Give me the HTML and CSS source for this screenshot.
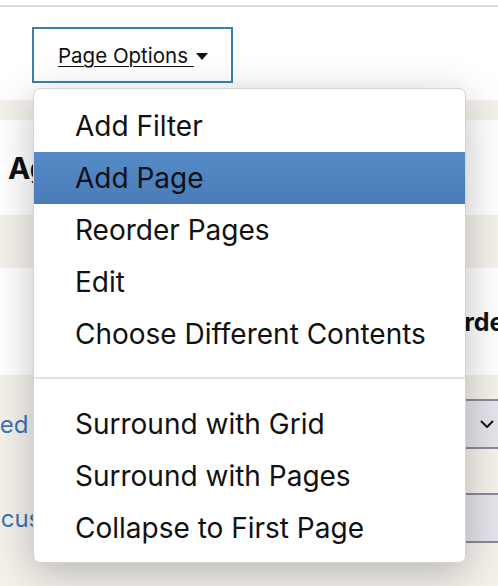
FILE: index.html
```html
<!DOCTYPE html>
<html lang="en">
<head>
<meta charset="utf-8">
<title>Page Options</title>
<link rel="stylesheet" href="styles.css">
</head>
<body>
  <div class="topbar"></div>

  <div class="toolbar">
    <button class="options-btn" type="button">
      <span class="options-label">Page Options </span><span class="caret"></span>
    </button>
  </div>

  <div class="band band-thin"></div>

  <section class="panel panel-title">
    <h1 class="title">Agenda</h1>
  </section>

  <div class="band band-mid"></div>

  <section class="panel panel-head">
    <h2 class="col-head">Orders</h2>
  </section>

  <section class="form">
    <div class="form-row">
      <span class="form-label">Shared</span>
      <div class="select-box">
        <svg class="chev" viewBox="0 0 14 9" width="14" height="9" aria-hidden="true">
          <path d="M1.5 1.5 L7 7 L12.5 1.5" fill="none" stroke="#111" stroke-width="2" stroke-linecap="round" stroke-linejoin="round"/>
        </svg>
      </div>
    </div>
    <div class="form-row">
      <span class="form-label">Add custom fields</span>
      <div class="select-box"></div>
    </div>
  </section>

  <div class="menu" role="menu">
    <ul class="menu-group">
      <li class="menu-item">Add Filter</li>
      <li class="menu-item is-active">Add Page</li>
      <li class="menu-item">Reorder Pages</li>
      <li class="menu-item">Edit</li>
      <li class="menu-item">Choose Different Contents</li>
    </ul>
    <hr class="menu-sep">
    <ul class="menu-group">
      <li class="menu-item">Surround with Grid</li>
      <li class="menu-item">Surround with Pages</li>
      <li class="menu-item">Collapse to First Page</li>
    </ul>
  </div>
</body>
</html>
```

FILE: styles.css
```css
* {
  box-sizing: border-box;
}

html, body {
  margin: 0;
  padding: 0;
}

body {
  position: relative;
  width: 498px;
  height: 586px;
  overflow: hidden;
  background: #f4f1eb;
  font-family: Inter, "Noto Sans", sans-serif;
  color: #111;
}

.topbar {
  height: 7px;
  background: #fff;
  border-bottom: 2px solid #dcdcdc;
}

.toolbar {
  background: #fff;
  padding: 20px 0 17px 32px;
}

.options-btn {
  display: flex;
  align-items: center;
  width: 201px;
  height: 56px;
  padding: 0 0 0 24px;
  background: #fff;
  border: 2px solid #3a80b2;
  font: inherit;
  font-size: 20.5px;
  color: #111;
  cursor: pointer;
}

.options-label {
  text-decoration: underline;
  text-underline-offset: 3px;
  text-decoration-thickness: 1px;
  white-space: pre;
}

.caret {
  width: 0;
  height: 0;
  margin-left: 2px;
  margin-top: 3px;
  border-left: 6.5px solid transparent;
  border-right: 6.5px solid transparent;
  border-top: 7px solid #111;
}

.band {
  background: #f4f1eb;
}

.band-thin {
  height: 20px;
}

.band-mid {
  height: 53px;
}

.panel {
  background: #fff;
}

.panel-title {
  height: 95px;
  display: flex;
  align-items: center;
  padding-left: 8px;
}

.title {
  margin: 0;
  font-size: 30px;
  font-weight: 700;
}

.panel-head {
  height: 107px;
  display: flex;
  align-items: center;
  padding-left: 445px;
}

.col-head {
  margin: 0;
  font-size: 25px;
  font-weight: 700;
  white-space: nowrap;
}

.form {
  display: flex;
  flex-direction: column;
  gap: 44px;
  padding-top: 24px;
  margin-left: -52px;
}

.form-row {
  display: flex;
  align-items: center;
  height: 50px;
}

.form-label {
  width: 517px;
  flex: none;
  font-size: 24px;
  color: #3b76b5;
  white-space: nowrap;
}

.select-box {
  flex: none;
  width: 120px;
  height: 50px;
  display: flex;
  align-items: center;
  padding-left: 15px;
  background: #e5e4eb;
  border-top: 2px solid #8b8b98;
  border-bottom: 2px solid #8b8b98;
}

/* dropdown menu floating above the page */
.menu {
  position: absolute;
  left: 33px;
  top: 88px;
  width: 433px;
  padding: 11px 0 8px;
  background: #fff;
  border: 1px solid #d4d4d4;
  border-radius: 7px;
  box-shadow: 0 10px 40px rgba(0, 0, 0, 0.25);
}

.menu-group {
  list-style: none;
  margin: 0;
  padding: 0;
}

.menu-item {
  height: 52px;
  display: flex;
  align-items: center;
  padding-left: 41px;
  font-size: 28px;
  color: #111;
  white-space: nowrap;
}

.menu-item.is-active {
  background: linear-gradient(#548bc7, #4a7cb8);
}

.menu-sep {
  margin: 17px 0 19px;
  border: 0;
  height: 2px;
  background: #e3e3e3;
}
```
